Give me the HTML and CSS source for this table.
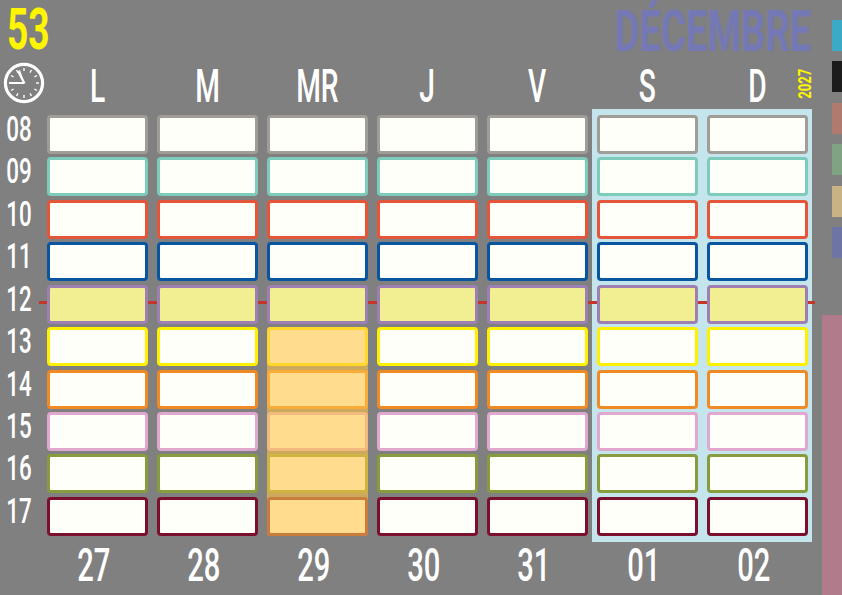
FILE: index.html
```html
<!DOCTYPE html>
<html lang="fr">
<head>
<meta charset="utf-8">
<title>Semaine 53 — Décembre 2027</title>
<link rel="stylesheet" href="styles.css">
</head>
<body>
<div class="page">
  <div class="main">
    <div class="top">
      <span class="week">53</span>
      <span class="month">DÉCEMBRE</span>
    </div>
    <div class="board">
      <div class="layer back">
        <div class="weekend"></div>
        <div class="noon-line"></div>
      </div>
      <div class="layer content">
        <div class="clock">
          <svg viewBox="0 0 42 42" width="42" height="42">
            <circle cx="21" cy="21" r="18.6" fill="none" stroke="#fff" stroke-width="3.2"/>
            <g stroke="#fff" stroke-width="1.4" stroke-linecap="butt">
              <line x1="21" y1="6" x2="21" y2="9"/>
              <line x1="28.5" y1="8" x2="27" y2="10.6"/>
              <line x1="34" y1="13.5" x2="31.4" y2="15"/>
              <line x1="36" y1="21" x2="33" y2="21"/>
              <line x1="34" y1="28.5" x2="31.4" y2="27"/>
              <line x1="28.5" y1="34" x2="27" y2="31.4"/>
              <line x1="21" y1="36" x2="21" y2="33"/>
              <line x1="13.5" y1="34" x2="15" y2="31.4"/>
              <line x1="8" y1="28.5" x2="10.6" y2="27"/>
              <line x1="8" y1="13.5" x2="10.6" y2="15"/>
              <line x1="13.5" y1="8" x2="15" y2="10.6"/>
            </g>
            <line x1="21" y1="21" x2="6" y2="21" stroke="#fff" stroke-width="2"/>
            <line x1="21.5" y1="21.5" x2="15" y2="9" stroke="#fff" stroke-width="2.2"/>
            <line x1="21" y1="21" x2="16.5" y2="8" stroke="#fff" stroke-width="1"/>
          </svg>
        </div>
        <div class="day"><span>L</span></div>
        <div class="day"><span>M</span></div>
        <div class="day"><span>MR</span></div>
        <div class="day"><span>J</span></div>
        <div class="day"><span>V</span></div>
        <div class="day"><span>S</span></div>
        <div class="day day-last"><span>D</span><span class="year">2027</span></div>

        <div class="hour"><span>08</span></div>
        <div class="cell c08"></div><div class="cell c08"></div><div class="cell c08"></div><div class="cell c08"></div><div class="cell c08"></div><div class="cell c08"></div><div class="cell c08"></div>

        <div class="hour"><span>09</span></div>
        <div class="cell c09"></div><div class="cell c09"></div><div class="cell c09"></div><div class="cell c09"></div><div class="cell c09"></div><div class="cell c09"></div><div class="cell c09"></div>

        <div class="hour"><span>10</span></div>
        <div class="cell c10"></div><div class="cell c10"></div><div class="cell c10"></div><div class="cell c10"></div><div class="cell c10"></div><div class="cell c10"></div><div class="cell c10"></div>

        <div class="hour"><span>11</span></div>
        <div class="cell c11"></div><div class="cell c11"></div><div class="cell c11"></div><div class="cell c11"></div><div class="cell c11"></div><div class="cell c11"></div><div class="cell c11"></div>

        <div class="hour"><span>12</span></div>
        <div class="cell c12"></div><div class="cell c12"></div><div class="cell c12"></div><div class="cell c12"></div><div class="cell c12"></div><div class="cell c12"></div><div class="cell c12"></div>

        <div class="hour"><span>13</span></div>
        <div class="cell c13"></div><div class="cell c13"></div><div class="cell c13"></div><div class="cell c13"></div><div class="cell c13"></div><div class="cell c13"></div><div class="cell c13"></div>

        <div class="hour"><span>14</span></div>
        <div class="cell c14"></div><div class="cell c14"></div><div class="cell c14"></div><div class="cell c14"></div><div class="cell c14"></div><div class="cell c14"></div><div class="cell c14"></div>

        <div class="hour"><span>15</span></div>
        <div class="cell c15"></div><div class="cell c15"></div><div class="cell c15"></div><div class="cell c15"></div><div class="cell c15"></div><div class="cell c15"></div><div class="cell c15"></div>

        <div class="hour"><span>16</span></div>
        <div class="cell c16"></div><div class="cell c16"></div><div class="cell c16"></div><div class="cell c16"></div><div class="cell c16"></div><div class="cell c16"></div><div class="cell c16"></div>

        <div class="hour"><span>17</span></div>
        <div class="cell c17"></div><div class="cell c17"></div><div class="cell c17"></div><div class="cell c17"></div><div class="cell c17"></div><div class="cell c17"></div><div class="cell c17"></div>

        <div class="date-spacer"></div>
        <div class="date"><span>27</span></div>
        <div class="date"><span>28</span></div>
        <div class="date"><span>29</span></div>
        <div class="date"><span>30</span></div>
        <div class="date"><span>31</span></div>
        <div class="date"><span>01</span></div>
        <div class="date"><span>02</span></div>
      </div>
      <div class="layer front">
        <div class="busy"></div>
      </div>
    </div>
  </div>
  <div class="side">
    <div class="tab t-cyan"></div>
    <div class="tab t-black"></div>
    <div class="tab t-brown"></div>
    <div class="tab t-green"></div>
    <div class="tab t-tan"></div>
    <div class="tab t-slate"></div>
    <div class="pink-bar"></div>
  </div>
</div>
</body>
</html>
```
FILE: styles.css
```css
html, body {
  margin: 0;
  padding: 0;
}
body {
  background: #808080;
  font-family: Roboto, "Liberation Sans", Arial, sans-serif;
  font-weight: 700;
  color: #fff;
  width: 842px;
  height: 595px;
  overflow: hidden;
}
.page {
  display: flex;
  width: 842px;
  height: 595px;
}
.main {
  width: 822px;
  flex: none;
}
.top {
  display: flex;
  justify-content: space-between;
  align-items: flex-start;
  height: 58.5px;
  padding: 0 11px 0 7px;
}
.week {
  display: inline-block;
  font-size: 58px;
  line-height: 58px;
  color: #fff500;
  transform: scaleX(0.64);
  transform-origin: left center;
}
.month {
  display: inline-block;
  font-size: 57px;
  line-height: 58px;
  margin-top: 3px;
  font-weight: 700;
  color: #7479b5;
  transform: scaleX(0.67);
  transform-origin: right center;
}

.board {
  display: grid;
}
.layer {
  grid-area: 1 / 1;
  display: grid;
  grid-template-columns: 38px repeat(7, 101px);
  grid-template-rows: 53px repeat(10, 39px) 52px;
  column-gap: 9px;
  row-gap: 3.44px;
}
.front {
  pointer-events: none;
}

.weekend {
  grid-column: 7 / 9;
  grid-row: 2 / 12;
  margin: -6px -4px -6px -5px;
  background: #c4e5eb;
}
.noon-line {
  grid-column: 2 / 9;
  grid-row: 6;
  align-self: start;
  margin: 16px -7px 0 -8px;
  height: 3px;
  background: #c4352a;
}

.clock {
  justify-self: start;
  align-self: start;
  margin: 3px 0 0 3px;
  width: 42px;
  height: 42px;
}
.clock svg {
  display: block;
}
.day {
  position: relative;
  display: flex;
  justify-content: center;
  align-items: flex-start;
}
.day span:first-child {
  display: inline-block;
  font-size: 47px;
  line-height: 53px;
  font-weight: 500;
  transform: scaleX(0.6);
}
.year {
  position: absolute;
  right: -4px;
  top: 3px;
  writing-mode: vertical-rl;
  transform: rotate(180deg) scaleY(0.69);
  font-size: 19px;
  line-height: 15px;
  color: #fff500;
}

.hour {
  display: flex;
  justify-content: center;
  align-items: flex-start;
}
.hour span {
  display: inline-block;
  font-size: 35px;
  line-height: 30px;
  font-weight: 500;
  transform: scaleX(0.64);
}

.cell {
  box-sizing: border-box;
  border: 3px solid #a09d99;
  border-radius: 4px;
  background: #fffffa;
}
.c08 { border-color: #a09d99; }
.c09 { border-color: #7dcbbb; }
.c10 { border-color: #e4553a; }
.c11 { border-color: #0a55a0; }
.c12 { border-color: #9e7fb3; background: #f2ee92; }
.c13 { border-color: #fff000; }
.c14 { border-color: #f08a25; }
.c15 { border-color: #e0a7cf; }
.c16 { border-color: #879c3d; }
.c17 { border-color: #7b0f2e; }

.date {
  display: flex;
  justify-content: center;
  align-items: flex-start;
  padding-right: 7px;
}
.date span {
  display: inline-block;
  font-size: 47px;
  line-height: 52px;
  font-weight: 500;
  transform: scaleX(0.62);
}

.busy {
  grid-column: 4;
  grid-row: 7 / 12;
  background: rgba(255, 196, 70, 0.6);
  border-radius: 3px;
}

.side {
  width: 20px;
  flex: none;
  display: flex;
  flex-direction: column;
  padding-top: 20px;
  box-sizing: border-box;
}
.tab {
  align-self: flex-end;
  width: 10px;
  height: 31px;
  margin-bottom: 10.4px;
}
.t-cyan { background: #3aaac7; }
.t-black { background: #1c1c1c; }
.t-brown { background: #b07a6e; }
.t-green { background: #7fa383; }
.t-tan { background: #c9b385; }
.t-slate { background: #6e74a3; }
.pink-bar {
  margin-top: auto;
  height: 280px;
  background: #b27b8b;
}
```
